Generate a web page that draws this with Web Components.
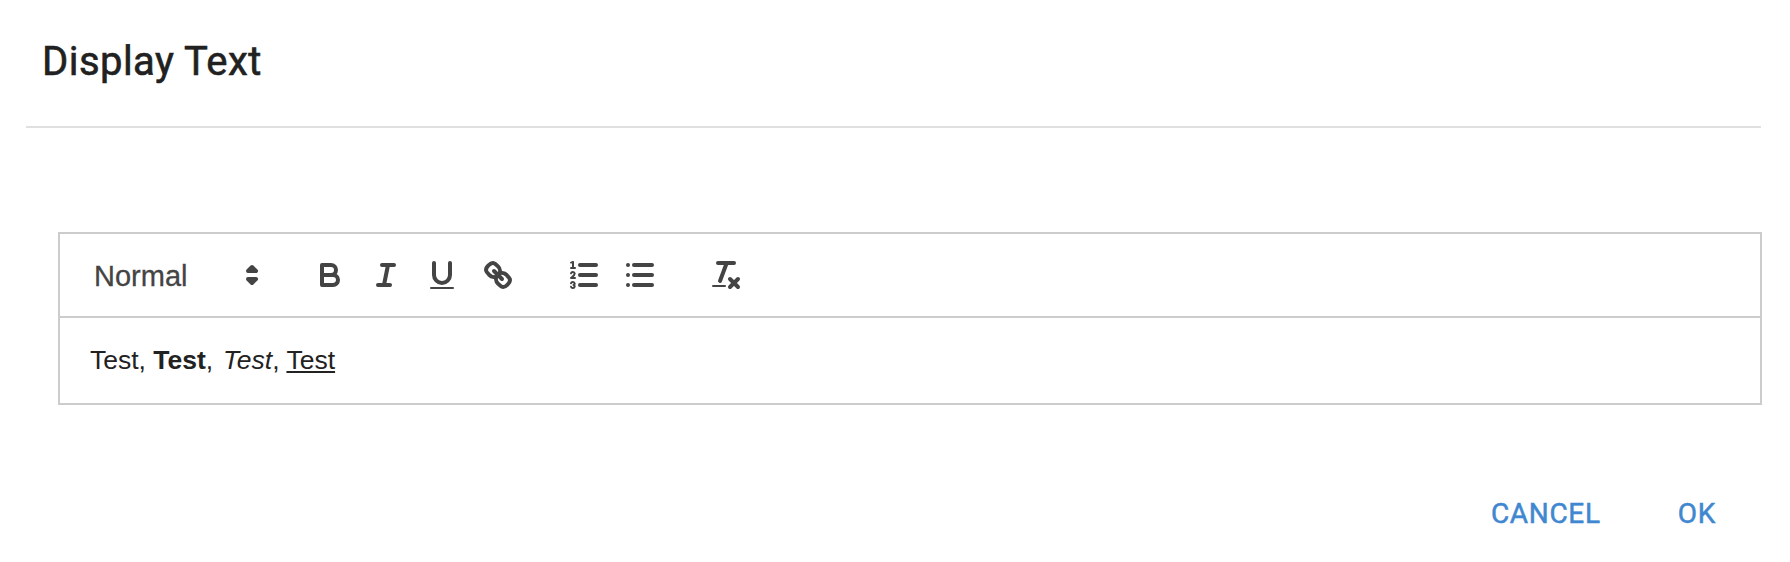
<!DOCTYPE html>
<html><head><meta charset="utf-8"><title>Display Text</title>
<style>html,body{margin:0;padding:0;background:#fff}body{font-family:"Liberation Sans",sans-serif}i{margin-left:2.5px}</style>
</head><body>
<x-dialog>
  <span slot="title">Display Text</span>
  <x-editor>
    <x-toolbar slot="toolbar">
      <x-picker>Normal</x-picker>
      <x-formats>
        <x-tool icon="bold"></x-tool><x-tool icon="italic"></x-tool><x-tool icon="underline"></x-tool><x-tool icon="link"></x-tool>
      </x-formats>
      <x-formats>
        <x-tool icon="ordered"></x-tool><x-tool icon="bullet"></x-tool>
      </x-formats>
      <x-formats>
        <x-tool icon="clean"></x-tool>
      </x-formats>
    </x-toolbar>
    <span>Test, <b>Test</b>, <i>Test</i>, <u>Test</u></span>
  </x-editor>
  <x-flat-button slot="actions">CANCEL</x-flat-button>
  <x-flat-button slot="actions">OK</x-flat-button>
</x-dialog>
<script>
const ICONS={
bold:'<path class="s" d="M5,4H9.5A2.5,2.5,0,0,1,12,6.5v0A2.5,2.5,0,0,1,9.5,9H5A0,0,0,0,1,5,9V4A0,0,0,0,1,5,4Z"/><path class="s" d="M5,9h5.5A2.5,2.5,0,0,1,13,11.5v0A2.5,2.5,0,0,1,10.5,14H5a0,0,0,0,1,0,0V9A0,0,0,0,1,5,9Z"/>',
italic:'<line class="s" x1="7" x2="13" y1="4" y2="4"/><line class="s" x1="5" x2="11" y1="14" y2="14"/><line class="s" x1="8" x2="10" y1="14" y2="4"/>',
underline:'<path class="s" d="M5,3V9a4.012,4.012,0,0,0,4,4H9a4.012,4.012,0,0,0,4-4V3"/><rect class="f" height="1" rx="0.5" ry="0.5" width="12" x="3" y="15"/>',
link:'<line class="s" x1="7" x2="11" y1="7" y2="11"/><path class="s" d="M8.9,4.577a3.476,3.476,0,0,1,.36,4.679A3.476,3.476,0,0,1,4.577,8.9C3.185,7.5,2.035,6.4,4.217,4.217S7.5,3.185,8.9,4.577Z"/><path class="s" d="M13.423,9.1a3.476,3.476,0,0,0-4.679-.36,3.476,3.476,0,0,0,.36,4.679c1.392,1.392,2.5,2.542,4.679.36S14.815,10.5,13.423,9.1Z"/>',
ordered:'<line class="s" x1="7" x2="15" y1="4" y2="4"/><line class="s" x1="7" x2="15" y1="9" y2="9"/><line class="s" x1="7" x2="15" y1="14" y2="14"/><line class="s t" x1="2.5" x2="4.5" y1="5.5" y2="5.5"/><path class="f" d="M3.5,6A0.5,0.5,0,0,1,3,5.5V3.085l-0.276.138A0.5,0.5,0,0,1,2.053,3c-0.124-.247-0.023-0.324.224-0.447l1-.5A0.5,0.5,0,0,1,4,2.5v3A0.5,0.5,0,0,1,3.5,6Z"/><path class="s t" d="M4.5,10.5h-2c0-.234,1.85-1.076,1.85-2.234A0.959,0.959,0,0,0,2.5,8.156"/><path class="s t" d="M2.5,14.846a0.959,0.959,0,0,0,1.85-.109A0.7,0.7,0,0,0,3.75,14a0.688,0.688,0,0,0,.6-0.736,0.959,0.959,0,0,0-1.85-.109"/>',
bullet:'<line class="s" x1="6" x2="15" y1="4" y2="4"/><line class="s" x1="6" x2="15" y1="9" y2="9"/><line class="s" x1="6" x2="15" y1="14" y2="14"/><line class="s" x1="3" x2="3" y1="4" y2="4"/><line class="s" x1="3" x2="3" y1="9" y2="9"/><line class="s" x1="3" x2="3" y1="14" y2="14"/>',
clean:'<line class="s" x1="5" x2="13" y1="3" y2="3"/><line class="s" x1="6" x2="9.35" y1="12" y2="3"/><line class="s" x1="11" x2="15" y1="11" y2="15"/><line class="s" x1="15" x2="11" y1="11" y2="15"/><rect class="f" height="1" rx="0.5" ry="0.5" width="7" x="2" y="14"/>',
arrows:'<polygon class="s a" points="7 11 9 13 11 11 7 11"/><polygon class="s a" points="7 7 9 5 11 7 7 7"/>'
};
const SVGSTYLE=`svg{width:36px;height:36px;display:block}
.s{fill:none;stroke:#444;stroke-width:2;stroke-linecap:round;stroke-linejoin:round}
.t{stroke-width:1}.a{fill:#444}.f{fill:#444}`;
function svg(n){return `<svg viewBox="0 0 18 18" aria-hidden="true">${ICONS[n]}</svg>`}
function def(name,html,setup){
  customElements.define(name,class extends HTMLElement{
    constructor(){super();this.attachShadow({mode:'open'}).innerHTML=html}
    connectedCallback(){if(setup)setup(this)}
  });
}
def('x-dialog',`<style>
:host{display:flex;flex-direction:column;width:1790px;height:562px;box-sizing:border-box;color:#212121;background:#fff}
header{margin:0 29px 0 26px;height:128px;box-sizing:border-box;border-bottom:2px solid #e0e0e0;padding:36px 0 0 16px;
 font:400 40px/52px Roboto,sans-serif;letter-spacing:.45px;color:#212121;-webkit-text-stroke:.6px #212121}
main{padding:104px 28px 0 58px}
footer{display:flex;justify-content:flex-end;gap:77px;padding:87px 74px 0 0}
</style><header><slot name="title"></slot></header><main><slot></slot></main><footer><slot name="actions"></slot></footer>`);
def('x-editor',`<style>
:host{display:block;border:2px solid #ccc;background:#fff}
.body{height:85px;box-sizing:border-box;padding:21px 30px 0 30px;font:26.5px/42px "Liberation Sans",sans-serif;color:#222}
</style><slot name="toolbar"></slot><div class="body"><slot></slot></div>`);
def('x-toolbar',`<style>
:host{display:flex;align-items:center;height:84px;box-sizing:border-box;padding:0 16px;border-bottom:2px solid #ccc}
</style><slot></slot>`);
def('x-picker',`<style>${SVGSTYLE}
:host{display:flex;align-items:center;justify-content:space-between;width:196px;box-sizing:border-box;padding:0 2px 0 18px;
 font:29px/44px "Liberation Sans",sans-serif;color:#444;margin-right:30px;-webkit-text-stroke:.3px #444}
.l{position:relative;top:1px}
</style><span class="l"><slot></slot></span>${svg('arrows')}`);
def('x-formats',`<style>:host{display:flex;margin-right:30px}</style><slot></slot>`);
def('x-tool',`<style>${SVGSTYLE}
:host{display:block;width:56px;height:48px;box-sizing:border-box;padding:6px 10px}
</style><span id="i"></span>`,el=>{el.shadowRoot.getElementById('i').innerHTML=svg(el.getAttribute('icon'))});
def('x-flat-button',`<style>
:host{display:block;font:400 28px/44px Roboto,sans-serif;letter-spacing:.7px;color:#3f87d0;-webkit-text-stroke:.5px #3f87d0}
</style><slot></slot>`);
</script>
</body></html>
